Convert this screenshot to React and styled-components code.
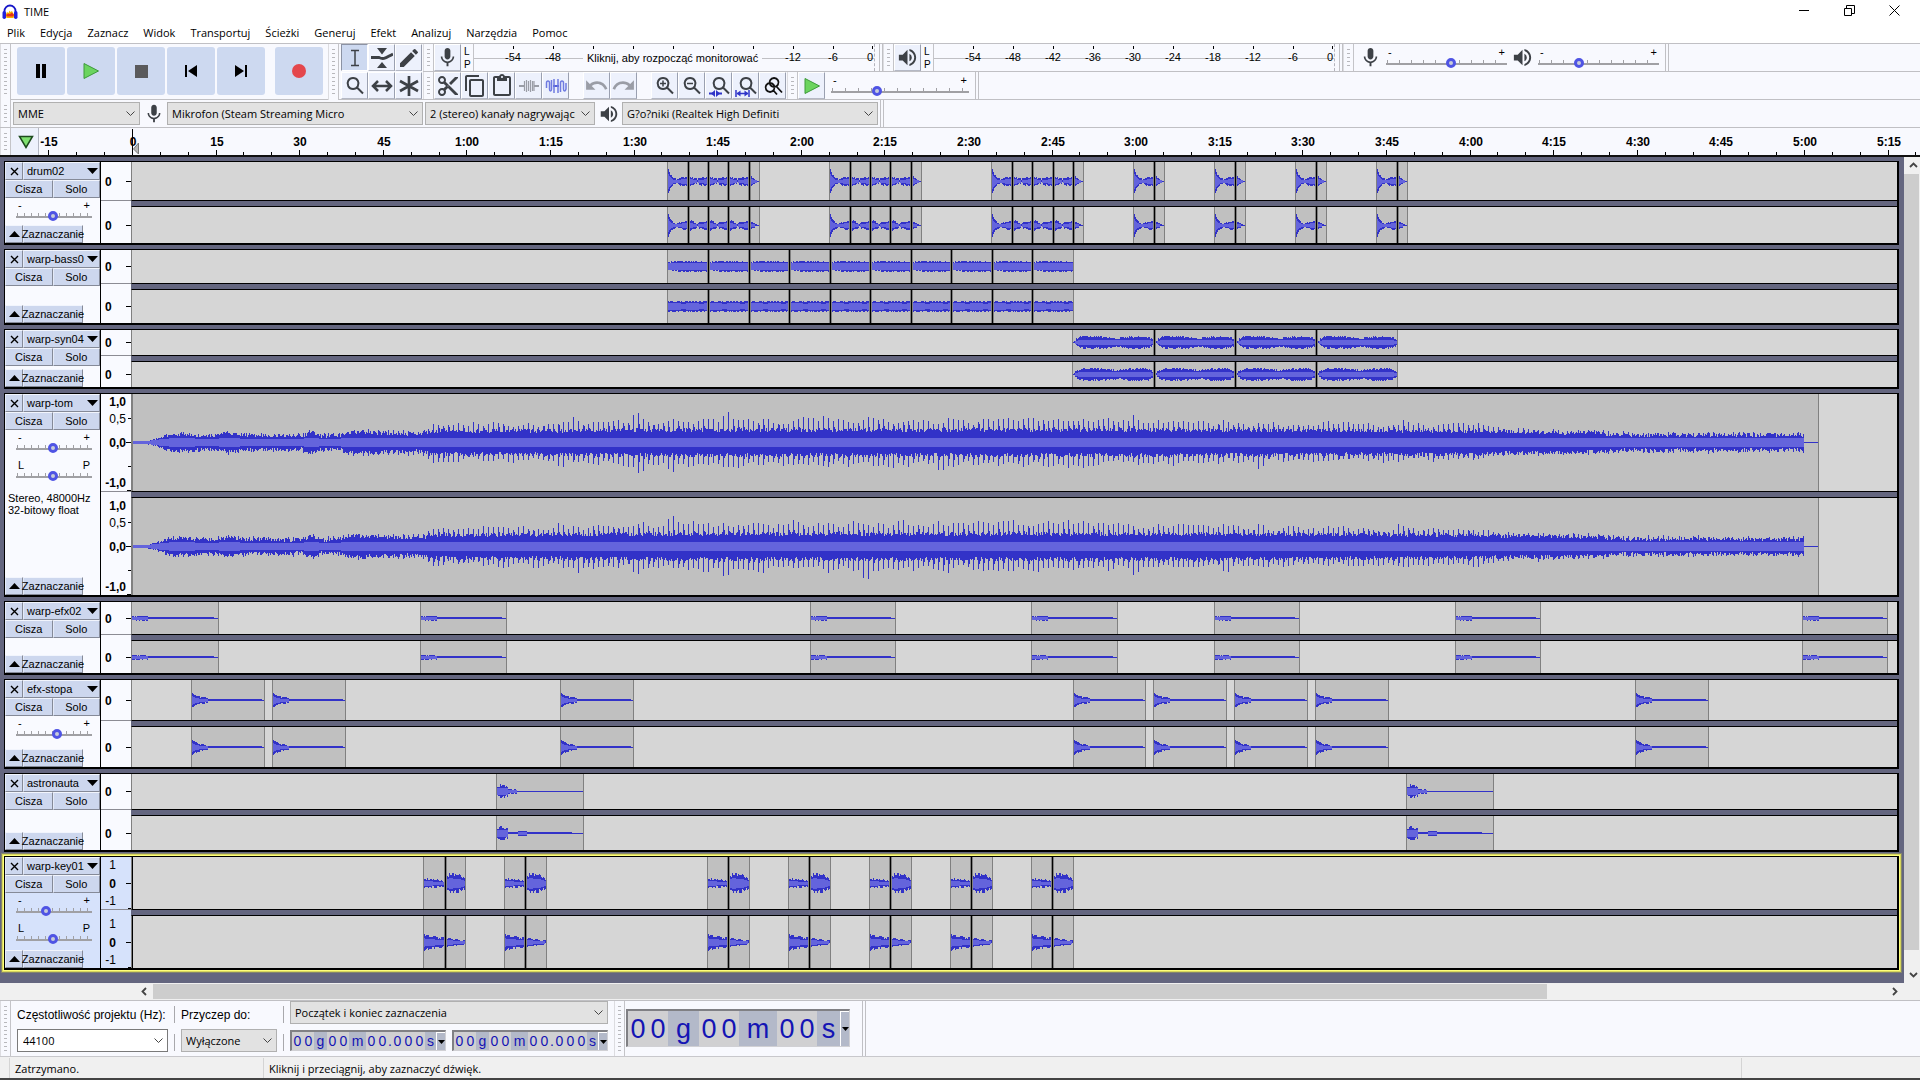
import React from "react";
import styled, { createGlobalStyle, css } from "styled-components";
import {
  MdMic,
  MdVolumeUp,
  MdContentCopy,
  MdContentPaste,
  MdContentCut,
  MdEdit,
  MdUndo,
  MdRedo,
} from "react-icons/md";

const ui = `"Open Sans", "Noto Sans", sans-serif`;
const arial = `"Liberation Sans", Arial, sans-serif`;

const GlobalStyle = createGlobalStyle`
* { box-sizing: border-box; }
body { margin: 0; background: #f0f0f0; color: #000; font-family: ${ui}; font-size: 11px; }
button, select, input { font-family: inherit; font-size: inherit; color: inherit; margin: 0; }
button { padding: 0; border: none; background: none; }
svg { display: block; flex: none; }
`;

const Window = styled.div`
  min-height: 100vh;
  display: flex;
  flex-direction: column;
  border-bottom: 2px solid #444;
`;

/* ---------- title + menu ---------- */
const TitleBar = styled.header`
  height: 23px;
  display: flex;
  align-items: center;
  background: #fff;
  padding: 0 3px 0 2px;
`;
const Title = styled.h1`
  flex: 1;
  margin: 0 0 0 6px;
  font-size: 11px;
  font-weight: 400;
`;
const WindowButton = styled.button`
  width: 45px;
  height: 20px;
  align-self: flex-start;
  display: grid;
  place-items: center;
`;
const MenuBar = styled.nav`
  height: 20px;
  display: flex;
  align-items: center;
  gap: 15px;
  padding-left: 7px;
  background: #fff;
`;
const MenuButton = styled.button`
  line-height: 16px;
`;

/* ---------- toolbars ---------- */
const Dock = styled.div`
  display: flex;
  background: #f8f9fe;
  border-top: 1px solid #c0c0c4;
`;
const DockColumn = styled.div`
  flex: 1;
  min-width: 0;
`;
const ToolRow = styled.div`
  height: 28px;
  display: flex;
  align-items: center;
  background: #f8f9fe;
  border-bottom: 1px solid #c0c0c4;
`;
const Grip = styled.div`
  flex: none;
  align-self: stretch;
  width: 11px;
  border-right: 1px solid #c4c4c8;
  border-left: 1px solid #dcdce0;
  background: repeating-linear-gradient(#b8b8bc 0 1px, #f8f9fe 1px 4px) content-box;
  padding: 5px 3px;
`;
const BarEnd = styled.div`
  flex: none;
  align-self: stretch;
  width: 4px;
  margin-left: ${(props) => props.$gap || 0}px;
  border-left: 1px solid #c0c0c4;
  border-right: 1px solid #c0c0c4;
`;
const Transport = styled.div`
  display: flex;
  gap: 2px;
  padding: 3px 5px 4px 6px;
  border-bottom: 1px solid #c0c0c4;
`;
const BigButton = styled.button`
  width: 48px;
  height: 48px;
  border-radius: 3px;
  background: #cdd9f0;
  display: grid;
  place-items: center;
  margin-left: ${(props) => (props.$apart ? "8px" : "0")};
`;
const ToolGrid = styled.div`
  display: grid;
  grid-template-columns: repeat(3, 27px);
  grid-auto-rows: 27px;
  row-gap: 1px;
  padding: 0 1px 0 2px;
  border-bottom: 1px solid #c0c0c4;
`;
const ToolButton = styled.button`
  flex: none;
  width: 27px;
  height: 27px;
  display: grid;
  place-items: center;
  color: ${(props) => (props.disabled ? "#9a9da6" : "#3d4146")};
  background: ${(props) => (props.$down ? "#cdd9f0" : "#edf1fc")};
  border-style: solid;
  border-width: 1px;
  border-color: ${(props) => (props.$down ? "#8c93a4 #fff #fff #8c93a4" : "#fff #9aa0b0 #b4b8c4 #fff")};
`;
const Space = styled.div`
  flex: none;
  width: ${(props) => props.$width}px;
`;
const Channels = styled.div`
  flex: none;
  width: 12px;
  padding-left: 3px;
  font: 10px/13px ${arial};
`;
const Meter = styled.div`
  position: relative;
  flex: none;
  align-self: stretch;
  display: flex;
  width: 402px;
  padding: 2px 0 0 19px;
  border-left: 1px solid #c4c4c8;
  border-right: 1px dashed #b4b4bc;
  background: linear-gradient(#c0c0c4, #c0c0c4) 0 14px / 100% 1px no-repeat;
`;
const Mark = styled.div`
  flex: none;
  width: 40px;
  display: flex;
  flex-direction: column;
  align-items: center;
  font: 11px/16px ${arial};
  &::before {
    content: "";
    width: 1px;
    height: 3px;
    background: #000;
  }
  &:last-of-type {
    width: 20px;
    align-items: flex-end;
  }
`;
const MeterHint = styled.span`
  position: absolute;
  left: 109px;
  top: 6px;
  padding: 0 4px;
  background: #f8f9fe;
  font: 11px/16px ${arial};
  white-space: nowrap;
`;
const Mixer = styled.div`
  display: flex;
  align-items: center;
  color: #3d4146;
  gap: 4px;
  padding-left: 5px;
`;

const SliderBox = styled.label`
  display: block;
  width: ${(props) => props.$width}px;
  color: #000;
`;
const SliderEnds = styled.span`
  display: flex;
  justify-content: space-between;
  padding: 0 2px;
  font: 11px/10px ${arial};
`;
const Range = styled.input`
  display: block;
  appearance: none;
  width: 100%;
  height: 12px;
  background:
    linear-gradient(#a0a0a4, #a0a0a4) 0 6px / 100% 2px no-repeat,
    repeating-linear-gradient(90deg, #a0a0a4 0 1px, transparent 1px ${(props) => props.$step}px) 1px 3px / 100% 3px no-repeat;
  &::-webkit-slider-thumb {
    appearance: none;
    width: 10px;
    height: 10px;
    border-radius: 50%;
    border: 3px solid #4f54e4;
    background: #c8ccd8;
  }
`;

const Picker = styled.span`
  position: relative;
  flex: none;
  display: block;
  width: ${(props) => props.$width}px;
  svg {
    position: absolute;
    right: 5px;
    top: 9px;
    pointer-events: none;
  }
`;
const Select = styled.select`
  display: block;
  appearance: none;
  width: 100%;
  height: 23px;
  padding: 0 19px 0 4px;
  border: 1px solid #b0b0b0;
  border-radius: 0;
  background: #e2e2e2;
  overflow: hidden;
`;
const DeviceIcon = styled.span`
  flex: none;
  width: 27px;
  display: grid;
  place-items: center;
  color: #3d4146;
`;

const TimeRuler = styled.div`
  height: 29px;
  display: flex;
  background: #f8f9fe;
  border-bottom: 2px solid #111;
`;
const PinButton = styled.button`
  width: 28px;
  padding-left: 3px;
  display: grid;
  place-items: center;
  background: #edf1fc;
  border-right: 1px solid #b4b8c4;
`;
const RulerScale = styled.svg`
  flex: 1;
  min-width: 0;
  height: 27px;
  overflow: hidden;
  font: bold 12px ${arial};
`;

/* ---------- tracks ---------- */
const Workspace = styled.main`
  flex: 1;
  display: flex;
`;
const TrackList = styled.div`
  flex: 1;
  min-width: 0;
  display: flex;
  flex-direction: column;
  gap: 4px;
  padding: 4px 5px 13px 4px;
  background: #64667f;
`;
const TrackBox = styled.section`
  display: flex;
  border: 1px solid #000;
  border-right-width: 2px;
  border-bottom-width: 2px;
  --panel: ${(props) => (props.$focus ? "#d6e2fb" : "#f9faff")};
  ${(props) =>
    props.$focus &&
    css`
      box-shadow: 0 0 0 1px #ffff7a, 0 0 0 2px #d6d65c, 0 0 0 3px #85866c;
    `}
`;
const Panel = styled.div`
  flex: none;
  width: 96px;
  display: flex;
  flex-direction: column;
  background: var(--panel);
  border-right: 1px solid #000;
  font: 11px/12px ${arial};
`;
const PanelRow = styled.div`
  display: flex;
  height: 18px;
`;
const PanelButton = styled.button`
  flex: ${(props) => (props.$width ? "none" : 1)};
  width: ${(props) => props.$width || 0}px;
  height: 18px;
  display: flex;
  align-items: center;
  justify-content: ${(props) => (props.$spread ? "space-between" : "center")};
  padding: ${(props) => (props.$spread ? "0 1px 0 3px" : "0")};
  white-space: nowrap;
  background: #cdd7ee;
  border-style: solid;
  border-width: 1px;
  border-color: #f2f5fd #858a98 #858a98 #e4eaf8;
`;
const Sliders = styled.div`
  display: flex;
  flex-direction: column;
  gap: 6px;
  padding: 2px 0 0 11px;
`;
const Format = styled.p`
  margin: 0;
  padding: 10px 0 0 3px;
`;
const PanelFoot = styled.div`
  height: 18px;
  display: flex;
  margin-top: auto;
`;
const VScales = styled.div`
  flex: none;
  width: 30px;
  display: flex;
  flex-direction: column;
  background: var(--panel);
`;
const VScale = styled.svg`
  width: 30px;
  height: ${(props) => props.$height}px;
  font: 12px ${arial};
  &:first-child {
    height: ${(props) => props.$height + 1}px;
    margin-bottom: 6px;
    border-bottom: 1px solid #8c8c94;
  }
`;
const Lanes = styled.div`
  flex: 1;
  min-width: 0;
  display: flex;
  flex-direction: column;
  gap: 5px;
  background: #64667f;
`;
const Lane = styled.svg`
  width: 100%;
  height: ${(props) => props.$height + 1}px;
  background: #d6d6d6;
  border-left: 1px solid #808080;
  border-bottom: 1px solid #000;
  &:last-child {
    border-bottom: none;
    border-top: 1px solid #000;
  }
`;

const VScroll = styled.div`
  flex: none;
  width: 16px;
  display: flex;
  flex-direction: column;
  background: #f0f0f0;
`;
const HScroll = styled.div`
  height: 17px;
  display: flex;
  align-items: center;
  padding: 0 17px 0 135px;
  background: #f0f0f0;
`;
const ScrollButton = styled.button`
  flex: none;
  width: 18px;
  height: 17px;
  display: grid;
  place-items: center;
`;
const ScrollRoom = styled.div`
  flex: 1;
  display: flex;
  align-self: stretch;
`;
const VThumb = styled.div`
  width: 15px;
  height: 98%;
  background: #cdcdcd;
`;
const HThumb = styled.div`
  width: 80.5%;
  margin: 1px 0;
  background: #cdcdcd;
`;

/* ---------- bottom ---------- */
const BottomBar = styled.div`
  height: 57px;
  display: flex;
  background: #f8f9fe;
  border-top: 1px solid #c0c0c4;
  border-bottom: 1px solid #c8c8cc;
`;
const Field = styled.div`
  display: flex;
  flex-direction: column;
  gap: 5px;
  margin-left: 6px;
`;
const FieldLabel = styled.label`
  height: 23px;
  padding-top: 3px;
  font: 12px/22px ${arial};
  white-space: nowrap;
`;
const RateInput = styled.input`
  display: block;
  width: 100%;
  height: 23px;
  padding: 0 20px 0 5px;
  border: 1px solid #7a7a7a;
  background: #fff;
`;
const Divider = styled.div`
  width: 1px;
  margin: 5px 0 0 6px;
  background: linear-gradient(#a8a8ac 17px, transparent 17px 28px, #a8a8ac 28px 45px, transparent 45px);
`;
const Times = styled.div`
  display: flex;
  gap: 6px;
`;
const TimeBox = styled.div`
  display: flex;
  height: ${(props) => (props.$big ? 38 : 21)}px;
  margin-top: ${(props) => (props.$big ? 8 : 1)}px;
  border-style: solid;
  border-width: 2px 1px 1px 2px;
  border-color: #808084 #d0d0d4 #d0d0d4 #808084;
  background: #b3b9c9;
  color: #1414b4;
  font: ${(props) => (props.$big ? "27px/36px" : "14px/19px")} ${arial};
`;
const Digit = styled.span`
  width: ${(props) => props.$width}px;
  text-align: center;
  background: ${(props) => (props.$unit ? "#b3b9c9" : "#d0d0d2")};
`;
const TimeMenu = styled.button`
  width: 9px;
  display: grid;
  place-items: center;
  border-left: 1px solid #fff;
  border-top: 1px solid #fff;
`;
const Status = styled.footer`
  height: 21px;
  display: flex;
  align-items: center;
  padding-left: 9px;
  background: #f0f0f0;
`;
const StatusCell = styled.div`
  flex: ${(props) => (props.$width ? "none" : 1)};
  width: ${(props) => props.$width || 0}px;
  padding: 3px 0 1px 5px;
  line-height: 16px;
  height: 20px;
  border-left: 1px solid #d4d4d4;
`;

/* ---------- icons ---------- */
const Logo = () => (
  <svg width="16" height="16" viewBox="0 0 16 16">
    <path d="M2.500 9V7a5.500 5.500 0 0 1 11 0v2" fill="none" stroke="#1717c8" strokeWidth="1.800" />
    <path d="M3.500 11l1.500-3 1.500 1 1-2.500 1 1.500 1.500-1 1 2 1.500 2-1 3h-7z" fill="#f7b500" />
    <path d="M4 11l2-1.500 2 .5 2-1.500 2 2.500-1 1.500H5z" fill="#e8321c" />
    <rect x="0.500" y="7" width="3.500" height="8" rx="1.700" fill="#2222dd" />
    <rect x="12" y="7" width="3.500" height="8" rx="1.700" fill="#2222dd" />
  </svg>
);
const Chevron = () => (
  <svg width="9" height="6" viewBox="0 0 9 6">
    <path d="M.5.500l4 4 4-4" fill="none" stroke="#444" />
  </svg>
);
const Arrow = ({ turn }) => (
  <svg width="9" height="9" viewBox="0 0 9 9">
    <path d="M1 3l3.500 3.500L8 3" fill="none" stroke="#444" strokeWidth="1.800" transform={`rotate(${turn} 4.500 4.500)`} />
  </svg>
);
const Tri = ({ up }) => (
  <svg width="11" height="6" viewBox="0 0 11 6">
    <path d={up ? "M0 6h11L5.500 0z" : "M0 0h11L5.500 6z"} />
  </svg>
);
const Play = ({ size = 18 }) => (
  <svg width={size} height={size} viewBox="0 0 18 18">
    <path d="M2 1.500v15L16.500 9z" fill="#6bd45f" stroke="#3c9a3a" />
  </svg>
);
const Icon = ({ children }) => (
  <svg width="22" height="22" viewBox="0 0 22 22" fill="none" stroke="currentColor" strokeWidth="2">
    {children}
  </svg>
);
const lens = <path d="M9 3a5.500 5.500 0 1 0 .1 0zM13 12.500l6 6" />;

const Close = () => (
  <svg width="9" height="9" viewBox="0 0 9 9">
    <path d="M1 1l7 7M8 1L1 8" stroke="#000" strokeWidth="1.400" />
  </svg>
);

/* ---------- waveforms ---------- */
// zero of the time line sits one pixel right of the lane edge
const ORIGIN = 132;

const noise = (n) => {
  const s = Math.sin(n * 127.1 + 11.7) * 43758.5453;
  return s - Math.floor(s);
};
const lerp = (points, x) => {
  for (let i = 1; i < points.length; i++) {
    const [x1, y1] = points[i];
    const [x0, y0] = points[i - 1];
    if (x <= x1) return y0 + ((y1 - y0) * (x - x0)) / (x1 - x0);
  }
  return points[points.length - 1][1];
};

const tomBody = [[0, 0], [10, 0], [14, 1], [22, 3], [30, 5], [42, 7], [80, 5], [96, 8], [106, 6], [168, 5], [178, 9], [188, 5], [208, 6], [220, 9], [250, 8], [286, 7], [300, 10], [400, 10], [500, 11], [1000, 11], [1340, 10], [1370, 9], [1460, 8], [1490, 6], [1671, 6]];
const tomSpike = [[0, 0], [30, 1], [286, 3], [300, 9], [420, 11], [560, 14], [950, 15], [1060, 10], [1340, 8], [1370, 3], [1671, 2]];

// each shape gives the half height and the inner half height at column i of a clip w wide
const shapes = {
  hit: (i, w, ch, n) => {
    const a = lerp([[0, 11], [2, 6], [5, 2], [8, 1], [10, 1], [14, 3], [18, 3], [21, 2]], i) * (ch ? 0.85 : 1);
    return [a + n * 1.6, a * 0.6];
  },
  loop: (i, w, ch, n) => {
    const a = lerp([[0, 4], [4, 2], [8, 0.6], [12, 2], [17, 3], [21, 3]], i);
    return [a + n * 1.8, a * 0.6];
  },
  tail: (i, w, ch, n) => {
    const a = lerp([[0, 5], [3, 2], [6, 1], [7, 0], [10, 0]], i) * (ch ? 0.7 : 1);
    return [a + (i < 5 ? n : 0), a * 0.5];
  },
  bass: (i, w, ch, n) => [(ch ? 3.7 : lerp([[0, 3], [20, 4], [41, 3]], i)) + n * 1.6, ch && i % 18 > 12 ? 2.2 : 3],
  syn: (i, w, ch, n) => {
    const a = Math.min(i * 0.6, (w - i) * 0.6, lerp([[0, 3.500], [14, 4.500], [34, 4], [44, 2.500], [54, 4], [66, 4.500], [81, 3.500]], i));
    return [a + (a > 1 ? n * 1.8 : 0), Math.min(a * 0.6, 1.6)];
  },
  tom: (i, w, ch, n, seed) => {
    if (i > 1670) return [0, 0];
    const beat = i % 5 === 0 ? 0.55 + 0.45 * noise(seed + 5) : i % 5 === 1 ? 0.3 * noise(seed) : 0;
    const rare = noise(Math.floor(i / 5) + 91 + (seed % 2)) > 0.92 ? 1.3 : 0.85;
    const body = lerp(tomBody, i);
    const jag = i > 288 ? 4 : i > 30 ? 4 : 1.5;
    return [body ? body - 1 + n * jag + lerp(tomSpike, i) * beat * rare : 0, Math.min(body * 0.5 + 0.5, 4.4)];
  },
  efx: (i, w, ch, n) => (i < 16 ? [1.2 + n, 0.9] : i < w - 5 ? [0.9, 0] : [0, 0]),
  stopa: (i, w, ch, n) => {
    if (i >= 16) return i < w - 3 ? [0.9, 0] : [0, 0];
    const a = lerp([[0, 6], [3, 4], [8, 2], [16, 1]], i);
    return [a + n * 1.5, a * 0.6];
  },
  astro: (i, w, ch, n) => {
    if (i < 11) return [lerp([[0, 2], [3, 5], [7, 4], [11, 2]], i) + n * 2.5, 2.5];
    if (!ch) return i < 20 ? [1 + n * 1.4, 1] : [0, 0];
    return i > 20 && i < 30 ? [1.6, 0.6] : [i < w - 12 ? 0.9 : 0, 0];
  },
  keyA: (i, w, ch, n) => {
    const a = ch ? lerp([[0, 5], [8, 4], [20, 2]], i) : lerp([[0, 3], [20, 1]], i);
    return [a + n * (ch ? 3 : 2), a * 0.7];
  },
  keyB: (i, w, ch, n) => {
    const a = ch ? lerp([[0, 3], [20, 0.5]], i) : lerp([[0, 5], [4, 7], [14, 5], [17, 4], [21, 1]], i);
    return [a + n * (ch ? 1.2 : 3.5), a * 0.7];
  },
};

const wavePaths = (shape, x, w, mid, ch) => {
  let outer = "";
  let inner = "";
  for (let i = 1; i < w; i++) {
    const seed = i + ch * 977;
    const [up, rms] = shapes[shape](i - 1, w, ch, noise(seed), seed);
    const [down] = shapes[shape](i - 1, w, ch, noise(seed + 333), seed + 333);
    const top = mid - Math.round(up);
    const bottom = mid + Math.round(down) + (down > 0.5 && down < 1 ? 0 : 1);
    outer += `M${x + i + 0.5} ${top}V${bottom}`;
    if (rms >= 0.5) inner += `M${x + i + 0.5} ${mid - Math.round(rms)}V${mid + Math.round(rms) + 1}`;
  }
  return [outer, inner];
};

function Clip({ shape, from, to, height, ch, joined }) {
  const x = from - ORIGIN;
  const w = to - from;
  const [outer, inner] = wavePaths(shape, x, w, Math.floor(height / 2), ch);
  return (
    <g shapeRendering="crispEdges">
      <rect x={x} y="0" width={w} height={height} fill="#c0c0c0" />
      <path d={outer} stroke="#3232c8" />
      <path d={inner} stroke="#6464dc" />
      <path d={`M${x + 0.5} 0V${height}M${x + w + 0.5} 0V${height}`} stroke="#808080" />
      {joined && (
        <>
          <rect x={x - 1} y="0" width="3" height={height} fill="#808080" />
          <rect x={x} y="0" width="1" height={height} fill="#000" />
        </>
      )}
    </g>
  );
}

// turns [a, b, c] into clips a-b and b-c that touch each other
const chain = (edges, names) =>
  edges.slice(1).map((to, i) => ({
    from: edges[i],
    to,
    shape: names[Math.min(i, names.length - 1)],
    joined: i > 0,
  }));

const drumLong = ["hit", "loop", "loop", "loop", "tail"];
const drumShort = ["hit", "tail"];
const keys = ["keyA", "keyB"];

const tracks = [
  {
    name: "drum02",
    heights: [38, 36],
    gain: 48,
    clips: [
      ...chain([667, 688, 708, 728, 749, 759], drumLong),
      ...chain([829, 850, 870, 890, 911, 921], drumLong),
      ...chain([991, 1012, 1032, 1053, 1073, 1083], drumLong),
      ...chain([1133, 1154, 1164], drumShort),
      ...chain([1214, 1235, 1245], drumShort),
      ...chain([1295, 1316, 1326], drumShort),
      ...chain([1376, 1397, 1407], drumShort),
    ],
  },
  {
    name: "warp-bass0",
    heights: [33, 33],
    clips: chain([667, 708, 749, 789, 830, 870, 911, 951, 992, 1032, 1073], ["bass"]),
  },
  { name: "warp-syn04", heights: [25, 25], clips: chain([1072, 1154, 1235, 1316, 1397], ["syn"]) },
  {
    name: "warp-tom",
    heights: [97, 97],
    gain: 48,
    pan: 48,
    format: true,
    scale: "full",
    clips: chain([132, 1818], ["tom"]),
  },
  {
    name: "warp-efx02",
    heights: [32, 32],
    clips: [[131, 218], [420, 506], [810, 895], [1031, 1117], [1214, 1299], [1455, 1540], [1802, 1887]].flatMap((e) => chain(e, ["efx"])),
  },
  {
    name: "efx-stopa",
    heights: [40, 40],
    gain: 54,
    clips: [[191, 264], [272, 345], [560, 633], [1073, 1145], [1153, 1226], [1234, 1307], [1315, 1388], [1635, 1708]].flatMap((e) => chain(e, ["stopa"])),
  },
  {
    name: "astronauta",
    heights: [35, 34],
    clips: [[496, 583], [1406, 1493]].flatMap((e) => chain(e, ["astro"])),
  },
  {
    name: "warp-key01",
    heights: [52, 52],
    gain: 38,
    pan: 48,
    focus: true,
    scale: "unit",
    clips: [[423, 445, 465], [504, 525, 546], [707, 728, 749], [788, 809, 830], [869, 890, 911], [950, 971, 992], [1031, 1052, 1073]].flatMap((e) => chain(e, keys)),
  },
];

function Slider({ label, value, width, step, ends = ["-", "+"] }) {
  return (
    <SliderBox $width={width}>
      <SliderEnds>
        <span>{ends[0]}</span>
        <span>{ends[1]}</span>
      </SliderEnds>
      <Range type="range" aria-label={label} defaultValue={value} $step={step} />
    </SliderBox>
  );
}

function Dropdown({ label, width, value, id }) {
  return (
    <Picker $width={width}>
      <Select aria-label={label} id={id}>
        <option>{value}</option>
      </Select>
      <Chevron />
    </Picker>
  );
}

function LevelScale({ kind, height }) {
  const mid = Math.floor(height / 2);
  if (kind === "full") {
    return (
      <VScale $height={height} textAnchor="end">
        <text x="25" y="12" fontWeight="bold">1,0</text>
        <text x="25" y="29">0,5</text>
        <text x="25" y={mid + 5} fontWeight="bold">0,0</text>
        <text x="25" y={height - 4} fontWeight="bold">-1,0</text>
        <path d={`M27 24.500h3M25 ${mid + 0.5}h5M27 ${mid + 24.5}h3M26 ${height - 0.5}h4`} stroke="#000" />
      </VScale>
    );
  }
  if (kind === "unit") {
    return (
      <VScale $height={height} textAnchor="end">
        <text x="15" y="12">1</text>
        <text x="15" y={mid + 5} fontWeight="bold">0</text>
        <text x="15" y={height - 4}>-1</text>
        <path d={`M25 ${mid + 0.5}h5M27 ${height - 0.5}h3`} stroke="#000" />
      </VScale>
    );
  }
  return (
    <VScale $height={height}>
      <text x="4" y={mid + 5} fontWeight="bold">0</text>
      <path d={`M25 ${mid + 0.5}h5`} stroke="#000" strokeWidth="1" />
    </VScale>
  );
}

function Track({ track }) {
  return (
    <TrackBox $focus={track.focus}>
      <Panel>
        <PanelRow>
          <PanelButton $width={18} aria-label="Zamknij"><Close /></PanelButton>
          <PanelButton $spread>{track.name}<Tri /></PanelButton>
        </PanelRow>
        <PanelRow>
          <PanelButton>Cisza</PanelButton>
          <PanelButton>Solo</PanelButton>
        </PanelRow>
        {track.gain && (
          <Sliders>
            <Slider label="Wzmocnienie" value={track.gain} width={76} step={7} />
            {track.pan && <Slider label="Panorama" value={track.pan} width={76} step={7} ends={["L", "P"]} />}
          </Sliders>
        )}
        {track.format && <Format>Stereo, 48000Hz<br />32-bitowy float</Format>}
        <PanelFoot>
          <PanelButton $width={18} aria-label="Zwiń"><Tri up /></PanelButton>
          <PanelButton $width={60}>Zaznaczanie</PanelButton>
        </PanelFoot>
      </Panel>
      <VScales>
        {track.heights.map((h, ch) => <LevelScale key={ch} kind={track.scale} height={h} />)}
      </VScales>
      <Lanes>
        {track.heights.map((h, ch) => (
          <Lane key={ch} $height={h}>
            {track.clips.map((clip) => <Clip key={clip.from} {...clip} height={h} ch={ch} />)}
            {track.focus && <rect width="1" height={h} fill="#000" />}
          </Lane>
        ))}
      </Lanes>
    </TrackBox>
  );
}

function LevelMeter({ hint }) {
  return (
    <>
      <Channels>L<br />P</Channels>
      <Meter>
        {[-54, -48, -42, -36, -30, -24, -18, -12, -6, 0].map((db) => (
          <Mark key={db}>{hint && db > -48 && db < -12 ? "" : db}</Mark>
        ))}
        {hint && <MeterHint>{hint}</MeterHint>}
      </Meter>
    </>
  );
}

function Ruler() {
  const perSecond = 83.6 / 15;
  const zero = 93;
  const ticks = [];
  for (let s = -15; s <= 320; s += 5) ticks.push(s);
  const at = (s) => Math.round(zero + s * perSecond);
  const text = (s) => (s < 60 ? s : `${Math.floor(s / 60)}:${String(s % 60).padStart(2, "0")}`);
  return (
    <RulerScale>
      {ticks.map((s) => (
        <rect key={s} x={at(s)} y={s % 15 ? 24 : 22} width="1" height="5" />
      ))}
      {ticks.filter((s) => s % 15 === 0).map((s) => (
        <text key={s} x={at(s) + 1} y="18" textAnchor="middle">{text(s)}</text>
      ))}
      <rect x={zero} y="1" width="1" height="26" />
      <path d="M99.500 15v11l-5-5z" fill="#b8b8b8" stroke="#777" />
    </RulerScale>
  );
}

const smallCells = { g: 13, m: 17, s: 11, ".": 4 };
const bigCells = { g: 31, m: 38, s: 23 };

function Timer({ label, value, big }) {
  const cells = big ? bigCells : smallCells;
  return (
    <TimeBox $big={big} role="group" aria-label={label}>
      {value.split("").map((c, i) => (
        <Digit key={i} $unit={/[a-z]/.test(c)} $width={cells[c] || (big ? 20 : 11)}>{c}</Digit>
      ))}
      <TimeMenu aria-label="Format czasu">
        <svg width="7" height="4" viewBox="0 0 7 4"><path d="M0 0h7L3.500 4z" /></svg>
      </TimeMenu>
    </TimeBox>
  );
}

function App() {
  return (
    <Window>
      <GlobalStyle />
      <TitleBar>
        <Logo />
        <Title>TIME</Title>
        <WindowButton aria-label="Minimalizuj">
          <svg width="11" height="11"><path d="M0 5.500h10" stroke="#000" /></svg>
        </WindowButton>
        <WindowButton aria-label="Przywróć">
          <svg width="11" height="11"><path d="M.5 3.500h7v7h-7zM2.500 3V.500h8v8H8" fill="none" stroke="#000" /></svg>
        </WindowButton>
        <WindowButton aria-label="Zamknij">
          <svg width="11" height="11"><path d="M.5.500l10 10M10.500.500l-10 10" stroke="#000" /></svg>
        </WindowButton>
      </TitleBar>
      <MenuBar>
        {["Plik", "Edycja", "Zaznacz", "Widok", "Transportuj", "Ścieżki", "Generuj", "Efekt", "Analizuj", "Narzędzia", "Pomoc"].map((m) => (
          <MenuButton key={m}>{m}</MenuButton>
        ))}
      </MenuBar>

      <Dock>
        <Grip />
        <Transport>
          <BigButton aria-label="Pauza"><svg width="14" height="14"><path d="M2 0h4v14H2zM8 0h4v14H8z" /></svg></BigButton>
          <BigButton aria-label="Odtwórz"><Play /></BigButton>
          <BigButton aria-label="Stop"><svg width="13" height="13"><rect width="13" height="13" fill="#5a5a5c" /></svg></BigButton>
          <BigButton aria-label="Początek"><svg width="14" height="14"><path d="M1 1h2v12H1zM13 1v12L4 7z" /></svg></BigButton>
          <BigButton aria-label="Koniec"><svg width="14" height="14"><path d="M11 1h2v12h-2zM1 1v12l9-6z" /></svg></BigButton>
          <BigButton aria-label="Nagraj" $apart><svg width="14" height="14"><circle cx="7" cy="7" r="7" fill="#e4474c" /></svg></BigButton>
        </Transport>
        <Grip />
        <ToolGrid>
          <ToolButton $down aria-label="Zaznaczanie"><Icon><path d="M7 3.500h8M7 18.500h8M11 3v16" strokeWidth="1.500" /></Icon></ToolButton>
          <ToolButton aria-label="Obwiednia"><Icon><path d="M0 10.500h8c5 2.500 7 0 14-3.500" strokeWidth="3" /><path d="M6 1h10l-5 6.500zM6 21h10l-5-6z" fill="currentColor" stroke="none" /></Icon></ToolButton>
          <ToolButton aria-label="Rysowanie"><MdEdit size={24} /></ToolButton>
          <ToolButton aria-label="Powiększenie"><Icon>{lens}</Icon></ToolButton>
          <ToolButton aria-label="Przesuwanie"><Icon><path d="M3 11h16M7 6l-5 5 5 5M15 6l5 5-5 5" strokeWidth="2.500" /></Icon></ToolButton>
          <ToolButton aria-label="Wielonarzędzie"><Icon><path d="M11 1v20M2 6l18 10M2 16L20 6" strokeWidth="2.700" /></Icon></ToolButton>
        </ToolGrid>
        <DockColumn>
          <ToolRow>
            <Grip />
            <ToolButton aria-label="Miernik nagrywania"><MdMic size={23} /></ToolButton>
            <LevelMeter hint="Kliknij, aby rozpocząć monitorować" />
            <BarEnd $gap={4} />
            <Grip />
            <ToolButton aria-label="Miernik odtwarzania"><MdVolumeUp size={23} /></ToolButton>
            <LevelMeter />
            <BarEnd $gap={4} />
            <Grip />
            <Mixer>
              <MdMic size={23} />
              <Slider label="Głośność nagrywania" value={54} width={121} step={12} />
              <MdVolumeUp size={23} />
              <Slider label="Głośność odtwarzania" value={32} width={121} step={12} />
            </Mixer>
            <BarEnd $gap={6} />
          </ToolRow>
          <ToolRow>
            <Grip />
            <ToolButton aria-label="Wytnij"><MdContentCut size={24} /></ToolButton>
            <ToolButton aria-label="Kopiuj"><MdContentCopy size={24} /></ToolButton>
            <ToolButton aria-label="Wklej"><MdContentPaste size={24} /></ToolButton>
            <ToolButton aria-label="Przytnij" disabled>
              <Icon>
                <path d="M1 11h5M16 11h5" strokeWidth="2" />
                <path d="M6.500 6v10M8.500 5v12M10.500 6v10M12.500 5v12M14.500 6v10M16 6v10" strokeWidth="1.200" />
              </Icon>
            </ToolButton>
            <ToolButton aria-label="Wycisz">
              <Icon>
                <path d="M8 11h6" stroke="#5560d8" strokeWidth="2" />
                <path d="M1.500 13V8q0-2 1.500-2t1.500 2v6q0 2 1 2t1-2V5M9 4v14M13 4v14M15.500 17V8q0-2 1.500-2t1.500 2v6q0 2 1 2t1.500-2V8" stroke="#6f7be0" strokeWidth="1.500" />
              </Icon>
            </ToolButton>
            <Space $width={14} />
            <ToolButton aria-label="Cofnij" disabled><MdUndo size={25} /></ToolButton>
            <ToolButton aria-label="Ponów" disabled><MdRedo size={25} /></ToolButton>
            <Space $width={14} />
            <ToolButton aria-label="Powiększ"><Icon>{lens}<path d="M6 8.500h6M9 5.500v6" strokeWidth="1.500" /></Icon></ToolButton>
            <ToolButton aria-label="Pomniejsz"><Icon>{lens}<path d="M6 8.500h6" strokeWidth="1.500" /></Icon></ToolButton>
            <ToolButton aria-label="Dopasuj zaznaczenie"><Icon><g transform="translate(2 0)">{lens}</g><path d="M1 18.500h5M9 18.500h5" stroke="#2f34c8" /><path d="M7 15v7l-4-3.500zM8 15v7l4-3.500z" fill="#2f34c8" stroke="none" /></Icon></ToolButton>
            <ToolButton aria-label="Dopasuj projekt"><Icon><g transform="translate(2 0)">{lens}</g><path d="M1 15v7M14 15v7M2 18.500h11" stroke="#2f34c8" strokeWidth="1.500" /><path d="M1.500 18.500l4-3v6zM13.500 18.500l-4-3v6z" fill="#2f34c8" stroke="none" /></Icon></ToolButton>
            <ToolButton aria-label="Przełącz powiększenie"><Icon><g stroke="#111"><path d="M12 3a4.500 4.500 0 1 0 .1 0zM14 11l6 6.500M8 8a4.500 4.500 0 1 0 .1 0zM11 15l4 4.500" strokeWidth="1.800" /></g></Icon></ToolButton>
            <Space $width={1} />
            <Grip />
            <ToolButton aria-label="Odtwórz z prędkością"><Play /></ToolButton>
            <Space $width={6} />
            <Slider label="Prędkość" value={32} width={138} step={13} />
            <BarEnd $gap={6} />
          </ToolRow>
        </DockColumn>
      </Dock>
      <ToolRow>
        <Grip />
        <Space $width={2} />
        <Dropdown label="Host dźwięku" width={127} value="MME" />
        <DeviceIcon><MdMic size={22} /></DeviceIcon>
        <Dropdown label="Urządzenie nagrywające" width={256} value="Mikrofon (Steam Streaming Micro" />
        <Space $width={2} />
        <Dropdown label="Kanały" width={170} value="2 (stereo) kanały nagrywające" />
        <DeviceIcon><MdVolumeUp size={22} /></DeviceIcon>
        <Dropdown label="Urządzenie odtwarzające" width={256} value="G?o?niki (Realtek High Definiti" />
        <BarEnd $gap={2} />
      </ToolRow>

      <TimeRuler>
        <Grip />
        <PinButton aria-label="Przypnij głowicę">
          <svg width="16" height="14"><path d="M1.500 1.500h13L8 12.500z" fill="#7fe070" stroke="#1d4a1d" strokeWidth="1.500" /></svg>
        </PinButton>
        <Ruler />
      </TimeRuler>

      <Workspace>
        <TrackList>
          {tracks.map((track) => <Track key={track.name} track={track} />)}
        </TrackList>
        <VScroll>
          <ScrollButton aria-label="W górę"><Arrow turn={180} /></ScrollButton>
          <ScrollRoom><VThumb /></ScrollRoom>
          <ScrollButton aria-label="W dół"><Arrow turn={0} /></ScrollButton>
        </VScroll>
      </Workspace>
      <HScroll>
        <ScrollButton aria-label="W lewo"><Arrow turn={90} /></ScrollButton>
        <ScrollRoom><HThumb /></ScrollRoom>
        <ScrollButton aria-label="W prawo"><Arrow turn={-90} /></ScrollButton>
      </HScroll>

      <BottomBar>
        <Grip />
        <Field>
          <FieldLabel htmlFor="rate">Częstotliwość projektu (Hz):</FieldLabel>
          <Picker $width={151}>
            <RateInput id="rate" defaultValue="44100" />
            <Chevron />
          </Picker>
        </Field>
        <Divider />
        <Field>
          <FieldLabel htmlFor="snap">Przyczep do:</FieldLabel>
          <Dropdown id="snap" width={96} value="Wyłączone" />
        </Field>
        <Divider />
        <Field>
          <Dropdown label="Zakres" width={318} value="Początek i koniec zaznaczenia" />
          <Times>
            <Timer label="Początek" value="00g00m00.000s" />
            <Timer label="Koniec" value="00g00m00.000s" />
          </Times>
        </Field>
        <Space $width={6} />
        <Grip />
        <Space $width={1} />
        <Timer label="Pozycja" value="00g00m00s" big />
        <BarEnd $gap={12} />
      </BottomBar>
      <Status>
        <StatusCell $width={254}>Zatrzymano.</StatusCell>
        <StatusCell>Kliknij i przeciągnij, aby zaznaczyć dźwięk.</StatusCell>
        <StatusCell $width={179} />
      </Status>
    </Window>
  );
}

export default App;
